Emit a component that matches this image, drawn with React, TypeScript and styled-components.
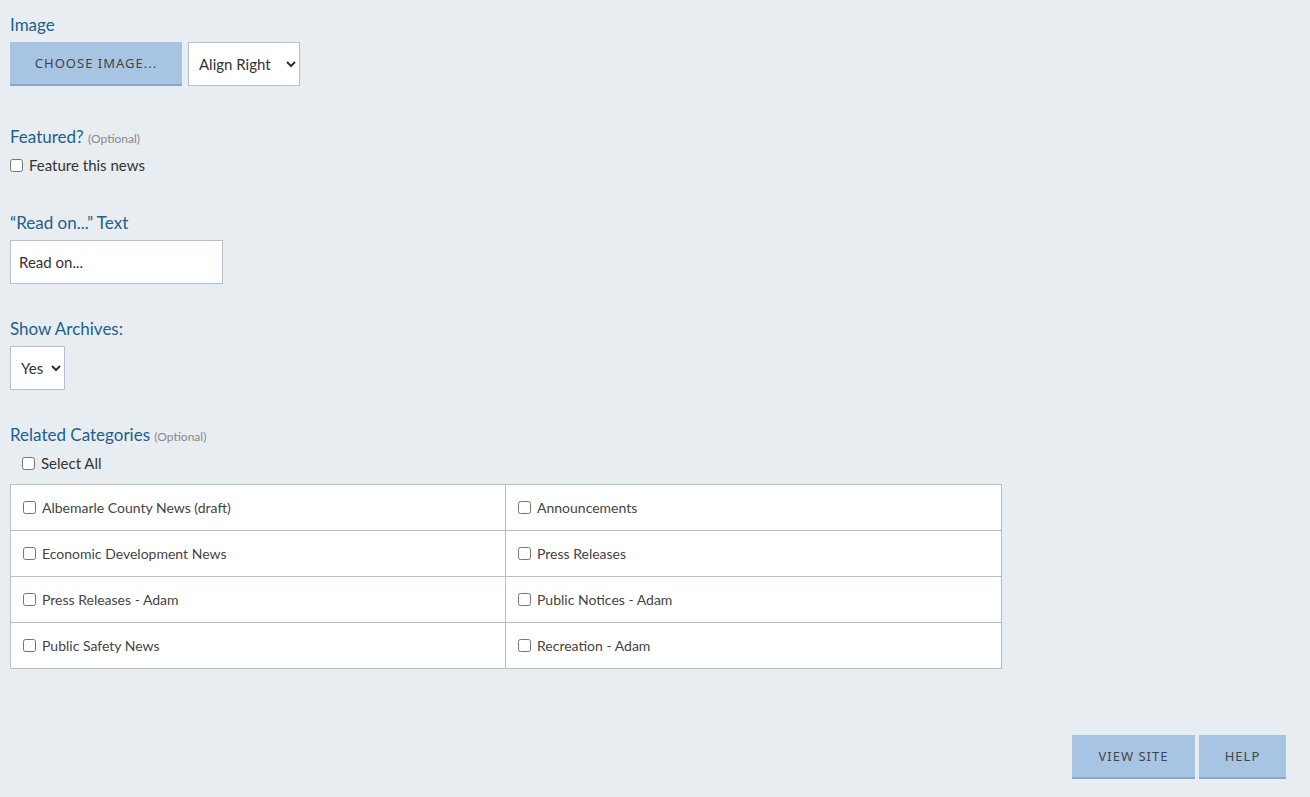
import React from "react";
import styled, { createGlobalStyle } from "styled-components";

const Global = createGlobalStyle`
  html, body { margin: 0; background: #e8edf2; }
  body { font-family: Lato, "Noto Sans", sans-serif; color: #333; }
  input[type=checkbox] { width: 13px; height: 13px; margin: 0; }
`;

const Page = styled.div`
  padding: 14px 10px 18px 10px;
  min-height: 765px;
  display: flex;
  flex-direction: column;
`;
const Section = styled.div<{ $mb: number }>`
  display: flex;
  flex-direction: column;
  align-items: flex-start;
  margin-bottom: ${p => p.$mb}px;
`;
const Label = styled.div`
  font-size: 17px;
  color: #21608c;
  line-height: 22px;
  margin-bottom: 6px;
`;
const Opt = styled.span`
  font-size: 12px;
  color: #888;
`;
const Row = styled.div`
  display: flex;
  gap: 6px;
  align-items: center;
`;
const Btn = styled.button<{ $w: number }>`
  width: ${p => p.$w}px;
  height: 44px;
  background: #a7c5e3;
  border: none;
  border-bottom: 2px solid #8ea8c4;
  font-family: "Noto Sans", sans-serif;
  font-size: 13px;
  letter-spacing: 1px;
  color: #444;
`;
const Select = styled.select<{ $w: number }>`
  width: ${p => p.$w}px;
  height: 44px;
  background: #fff;
  border: 1px solid #b3bfcc;
  font-family: Lato, sans-serif;
  font-size: 15px;
  color: #333;
  padding: 0 4px 0 6px;
`;
const Check = styled.label<{ $indent?: number }>`
  display: flex;
  align-items: center;
  gap: 6px;
  font-size: 15px;
  color: #333;
  padding-left: ${p => p.$indent ?? 0}px;
`;
const Input = styled.input`
  width: 213px;
  height: 44px;
  box-sizing: border-box;
  border: 1px solid #b3bfcc;
  font-family: Lato, sans-serif;
  font-size: 15px;
  padding: 0 8px;
  color: #333;
`;
const Grid = styled.div`
  display: grid;
  grid-template-columns: 1fr 1fr;
  width: 992px;
  box-sizing: border-box;
  border: 1px solid #b3bfcc;
  border-bottom: none;
  background: #fff;
  margin-top: 12px;
`;
const Cell = styled.div<{ $left: boolean }>`
  height: 45px;
  display: flex;
  align-items: center;
  padding-left: 12px;
  border-bottom: 1px solid #b3bfcc;
  border-right: ${p => (p.$left ? "1px solid #b3bfcc" : "none")};
  font-size: 14px;
  gap: 6px;
  color: #444;
`;
const Footer = styled.div`
  margin-top: auto;
  display: flex;
  justify-content: flex-end;
  gap: 4px;
  padding-right: 14px;
`;

const cats = [
  "Albemarle County News (draft)", "Announcements",
  "Economic Development News", "Press Releases",
  "Press Releases - Adam", "Public Notices - Adam",
  "Public Safety News", "Recreation - Adam",
];

export default function App() {
  return (
    <>
      <Global />
      <Page>
        <Section $mb={40}>
          <Label>Image</Label>
          <Row>
            <Btn $w={172}>CHOOSE IMAGE...</Btn>
            <Select $w={112}><option>Align Right</option></Select>
          </Row>
        </Section>
        <Section $mb={38}>
          <Label>Featured? <Opt>(Optional)</Opt></Label>
          <Check><input type="checkbox" />Feature this news</Check>
        </Section>
        <Section $mb={34}>
          <Label>“Read on...” Text</Label>
          <Input defaultValue="Read on..." />
        </Section>
        <Section $mb={34}>
          <Label>Show Archives:</Label>
          <Select $w={55}><option>Yes</option></Select>
        </Section>
        <Section $mb={20}>
          <Label>Related Categories <Opt>(Optional)</Opt></Label>
          <Check $indent={12}><input type="checkbox" />Select All</Check>
          <Grid>
            {cats.map((c, i) => (
              <Cell key={c} $left={i % 2 === 0}><input type="checkbox" />{c}</Cell>
            ))}
          </Grid>
        </Section>
        <Footer>
          <Btn $w={123}>VIEW SITE</Btn>
          <Btn $w={87}>HELP</Btn>
        </Footer>
      </Page>
    </>
  );
}
